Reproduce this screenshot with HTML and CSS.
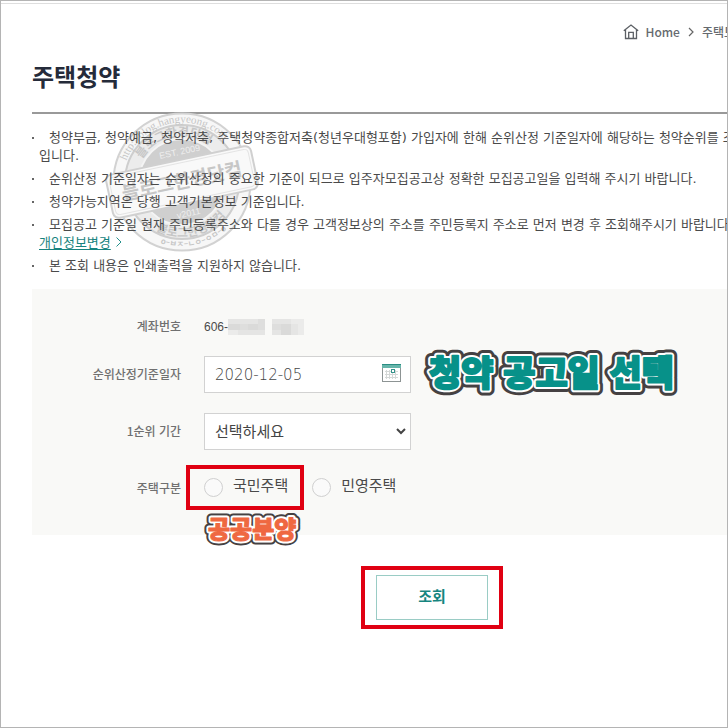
FILE: index.html
```html
<!DOCTYPE html>
<html lang="ko">
<head>
<meta charset="utf-8">
<meta name="viewport" content="width=device-width, initial-scale=1">
<title>주택청약</title>
<link rel="stylesheet" href="styles.css">
</head>
<body>
<div class="page">
  <nav class="crumbs">
    <a class="crumb" href="#">
      <svg class="home-icon" viewBox="0 0 16 16" width="16" height="16" fill="none" stroke="#5c6065" stroke-width="1.3"><path d="M.8 6.7 8 1l7.200 5.700M2.500 5.500v9h11v-9M5.700 14.500V8.300h4.600v6.200"/></svg>
      Home
    </a>
    <svg class="sep" viewBox="0 0 6 10" width="6" height="10" fill="none" stroke="#666" stroke-width="1.200"><path d="m1 1 4 4-4 4"/></svg>
    <a class="crumb" href="#">주택도</a>
  </nav>

  <main class="content">
    <h1 class="title">주택청약</h1>

    <section class="notice">
      <svg class="stamp" viewBox="0 0 160 144" width="160" height="144" aria-hidden="true">
        <defs>
          <path id="arc-outer" d="M20.500 71a59.500 59.500 0 0 1 119 0"/>
          <path id="arc-inner" d="M34 71a46 46 0 0 1 92 0"/>
          <path id="arc-low" d="M25 71a55 55 0 0 0 110 0"/>
          <path id="arc-base" d="M15 71a65 65 0 0 0 130 0"/>
        </defs>
        <circle cx="80" cy="71" r="68.500" fill="#f7f7f7" stroke="#d2d2d2" stroke-width="2"/>
        <circle cx="80" cy="71" r="57" fill="#ececec" stroke="#cecece" stroke-width="2"/>
        <circle cx="80" cy="71" r="43" fill="#cfcfcf" stroke="#f4f4f4" stroke-width="2"/>
        <g transform="rotate(-12 80 71)" text-anchor="middle">
          <text class="stamp-url"><textPath href="#arc-outer" startOffset="50%">http://blog.hangyeong.com</textPath></text>
          <text class="stamp-ring"><textPath href="#arc-inner" startOffset="50%">블로그한경닷컴</textPath></text>
          <text class="stamp-ring"><textPath href="#arc-low" startOffset="50%">블로그한경닷컴</textPath></text>
          <text class="stamp-base"><textPath href="#arc-base" startOffset="50%">o–ㅂㅈ–ㄴㅇ–ㅇㅁ–o</textPath></text>
          <text class="stamp-est" x="84" y="44">EST. 2009</text>
          <text class="stamp-est" x="80" y="106">v2011</text>
          <rect x="6" y="49" width="148" height="44" rx="6" fill="#f9f9f9" stroke="#d0d0d0" stroke-width="2"/>
          <rect x="9" y="52" width="142" height="38" rx="4" fill="none" stroke="#e4e4e4"/>
          <text class="stamp-name" x="80" y="77">블로그한경닷컴</text>
        </g>
      </svg>
      <ul class="notes">
        <li>청약부금, 청약예금, 청약저축, 주택청약종합저축(청년우대형포함) 가입자에 한해 순위산정 기준일자에 해당하는 청약순위를 조<br>입니다.</li>
        <li>순위산정 기준일자는 순위산정의 중요한 기준이 되므로 입주자모집공고상 정확한 모집공고일을 입력해 주시기 바랍니다.</li>
        <li>청약가능지역은 당행 고객기본정보 기준입니다.</li>
        <li>모집공고 기준일 현재 주민등록주소와 다를 경우 고객정보상의 주소를 주민등록지 주소로 먼저 변경 후 조회해주시기 바랍니다<br><a class="link" href="#">개인정보변경</a><svg class="link-arrow" viewBox="0 0 6 10" width="6" height="10" fill="none" stroke="#25908b"><path d="m.5.5 4.500 4.500-4.500 4.500"/></svg></li>
        <li>본 조회 내용은 인쇄출력을 지원하지 않습니다.</li>
      </ul>
    </section>

    <form>
      <div class="panel">
        <span class="label">계좌번호</span>
        <div class="account">606-<svg viewBox="0 0 76 16" width="76" height="16" shape-rendering="crispEdges" aria-hidden="true"><path fill="#e5e5e4" d="M0 0h37v16H0zM44 0h32v16H44z"/><path fill="#dadad9" d="M0 5h12v6H0zM20 5h10v6H20zM53 5h10v11H53z"/><path fill="#dededd" d="M12 5h8v6h-8zM30 0h7v11h-7zM44 5h9v6h-9z"/><path fill="#ebebea" d="M0 11h10v5H0zM63 0h13v5H63zM70 5h6v11h-6z"/></svg></div>

        <label class="label" for="base-date">순위산정기준일자</label>
        <div class="field">
          <input class="control date" id="base-date" type="text" value="2020-12-05">
          <button class="calendar" type="button" aria-label="날짜">
            <svg viewBox="0 0 19 18" width="19" height="18" shape-rendering="crispEdges"><path fill="#8d9494" d="M0 0h19v18H0z"/><path fill="#fff" d="M1 4h17v13H1z"/><path fill="#2a8d83" d="M0 0h19v1H0z"/><path fill="#66b5aa" d="M0 1h19v3H0z"/><path fill="#d4d8d7" d="M3 7h13v1H3zM3 10h13v1H3zM3 13h13v1H3zM4 6h1v9H4zM7 6h1v9H7zM10 6h1v9h-1zM13 6h1v9h-1z"/><path fill="#36938c" d="M9 5h4v4H9z"/><path fill="#fff" d="M10 6h2v2h-2z"/></svg>
          </button>
          <svg class="sticker sticker-date" viewBox="0 0 264 52" width="264" height="52">
            <g class="sticker-big"><text class="edge" x="8" y="38">청약 공고일 선택</text><text class="halo" x="8" y="38" aria-hidden="true">청약 공고일 선택</text><text class="teal" x="8" y="38" aria-hidden="true">청약 공고일 선택</text></g>
          </svg>
        </div>

        <label class="label" for="period">1순위 기간</label>
        <div class="field">
          <select class="control" id="period"><option>선택하세요</option></select>
          <svg class="chevron" viewBox="0 0 10 7" width="10" height="7" fill="none" stroke="#444" stroke-width="2"><path d="m1 1 4 4 4-4"/></svg>
        </div>

        <span class="label" id="kind">주택구분</span>
        <div class="choices" role="radiogroup" aria-labelledby="kind">
          <label class="choice marked"><input type="radio" name="kind">국민주택
            <svg class="sticker sticker-kind" viewBox="0 0 104 36" width="104" height="36">
              <g class="sticker-small"><text class="edge" x="6" y="27">공공분양</text><text class="halo" x="6" y="27" aria-hidden="true">공공분양</text><text class="orange" x="6" y="27" aria-hidden="true">공공분양</text></g>
            </svg>
          </label>
          <label class="choice"><input type="radio" name="kind">민영주택</label>
        </div>
      </div>

      <div class="actions">
        <div class="submit-frame"><button class="submit" type="submit">조회</button></div>
      </div>
    </form>
  </main>
</div>
</body>
</html>
```
FILE: styles.css
```css
* { box-sizing: border-box; }

body {
  margin: 0;
  background: #fff;
  color: #4a4a4a;
  font: 13px/18px "DejaVu Sans", "Noto Sans CJK KR", sans-serif;
}

.page {
  min-height: 100vh;
  border: 1px solid #b4b4b4;
  overflow: hidden;
  white-space: nowrap;
}

.page::before {
  content: "";
  display: block;
  height: 2px;
  border-bottom: 1px solid #dedede;
}

.crumbs {
  display: flex;
  align-items: center;
  justify-content: flex-end;
  gap: 8px;
  margin: 19px -8px 0 0;
  font: 500 12px/18px "Noto Sans CJK KR", sans-serif;
}

.crumb {
  display: flex;
  align-items: center;
  gap: 6px;
  color: #666a6f;
  text-decoration: none;
}

.content { padding-left: 31px; }

.title {
  margin: 17px 0 0;
  padding-bottom: 18px;
  border-bottom: 2px solid #999;
  color: #252b3a;
  font: 700 24px/36px "Noto Sans CJK KR", sans-serif;
}

.notice { position: relative; }

.stamp {
  position: absolute;
  left: 70px;
  top: -3px;
}

.stamp text {
  fill: #c6c6c6;
  font-family: "Noto Sans CJK KR", sans-serif;
}

.stamp .stamp-url { font-size: 11px; font-family: "Liberation Serif", serif; }
.stamp .stamp-ring { font-size: 12px; font-weight: 700; }
.stamp .stamp-base { font-size: 8px; font-weight: 700; }
.stamp .stamp-est { font-size: 9px; fill: #eee; font-family: "Liberation Sans", sans-serif; }
.stamp .stamp-name { font-size: 19px; font-weight: 700; }

.notes {
  position: relative;
  display: grid;
  gap: 5px;
  margin: 0;
  padding: 15px 0 14px 7px;
  list-style: none;
}

.notes li { text-indent: 10px; }

.notes li::before {
  content: "";
  float: left;
  width: 2px;
  height: 2px;
  margin: 8px 0 0 -7px;
  background: #666;
}

.link {
  color: #17837e;
  text-decoration: underline;
  text-underline-offset: 2px;
}

.link-arrow { margin-left: 5px; }

.panel {
  display: grid;
  grid-template-columns: 149px 1fr;
  gap: 20px 23px;
  align-items: center;
  padding: 28px 0 28px;
  background: #f9f9f7;
}

.label {
  padding-bottom: 1px;
  color: #707070;
  font: 500 12px/18px "Noto Sans CJK KR", sans-serif;
  text-align: right;
}

.account {
  display: flex;
  align-items: center;
  font: 12px/18px "Liberation Sans", sans-serif;
}

.field {
  position: relative;
  width: 207px;
}

.control {
  display: block;
  width: 100%;
  height: 37px;
  padding: 0 10px;
  border: 1px solid #d2d2d2;
  border-radius: 0;
  appearance: none;
  background: #fff;
  color: #444;
  font: 15px/20px "DejaVu Sans", "Noto Sans CJK KR", sans-serif;
}

.date { font-family: "DejaVu Sans Light", "DejaVu Sans", sans-serif; font-weight: 200; }

.calendar {
  position: absolute;
  right: 10px;
  top: 8px;
  padding: 0;
  border: 0;
  background: none;
  line-height: 0;
}

.chevron {
  position: absolute;
  right: 5px;
  top: 15px;
  pointer-events: none;
}

.choices {
  display: flex;
  gap: 24px;
  height: 37px;
}

.choice {
  position: relative;
  display: flex;
  align-items: center;
  gap: 10px;
  font-size: 15px;
  padding-bottom: 6px;
}

.choice input {
  width: 19px;
  height: 19px;
  margin: 4px 0 0;
  border: 1px solid #d0d0d0;
  border-radius: 50%;
  appearance: none;
  background: #fafafa;
}

.marked::after {
  content: "";
  position: absolute;
  inset: -5px -16px -3px -18px;
  border: 4px solid #e00012;
}

.sticker {
  position: absolute;
  overflow: visible;
}

.sticker-date { left: 217px; top: -8px; }
.sticker-kind { left: -2px; top: 41px; }

.sticker text {
  font-family: "Noto Sans CJK KR", sans-serif;
  font-weight: 900;
  stroke-linejoin: round;
}

.sticker-big { font-size: 35px; }
.sticker-small { font-size: 24px; }
.sticker .edge { fill: #454142; stroke: #454142; stroke-width: 12px; }
.sticker .halo { fill: #fff; stroke: #fff; stroke-width: 6px; }
.sticker .teal { fill: #079189; stroke: #079189; stroke-width: 2px; }
.sticker .orange { fill: #ef6841; stroke: #ef6841; stroke-width: 1px; }
.sticker-small .edge { stroke-width: 9px; }
.sticker-small .halo { stroke-width: 5px; }

.actions {
  display: flex;
  justify-content: center;
  padding: 31px 0 0 105px;
}

.submit-frame {
  padding: 5px 11px;
  border: 4px solid #e00012;
}

.submit {
  display: block;
  width: 112px;
  height: 45px;
  padding: 0 0 3px;
  border: 1px solid #9accc5;
  background: #fff;
  color: #16857f;
  font: 700 15px/20px "Noto Sans CJK KR", sans-serif;
}
```
